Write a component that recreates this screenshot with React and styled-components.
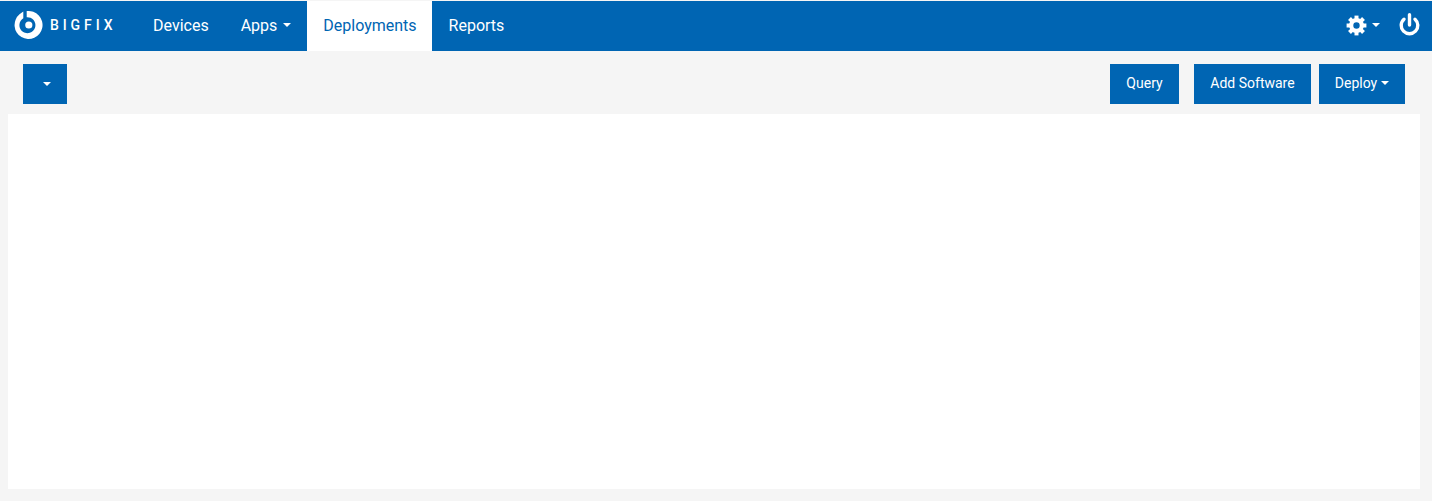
import React from "react";
import styled, { createGlobalStyle } from "styled-components";

const blue = "#0065b3";

const GlobalStyle = createGlobalStyle`
  html, body {
    margin: 0;
    padding: 0;
    background: #f5f5f5;
    font-family: Roboto, "Liberation Sans", sans-serif;
  }
`;

const Page = styled.div`
  height: 501px;
  display: flex;
  flex-direction: column;
  overflow: hidden;
`;

const Navbar = styled.header`
  height: 50px;
  margin-top: 1px;
  display: flex;
  align-items: stretch;
  background: ${blue};
  color: #fff;
`;

const Brand = styled.div`
  width: 137px;
  display: flex;
  align-items: center;
  gap: 7px;
  padding: 0 0 2px 14px;
  box-sizing: border-box;
`;

const BrandName = styled.span`
  font-size: 14px;
  font-weight: 500;
  letter-spacing: 3.9px;
`;

const NavItem = styled.a`
  display: flex;
  align-items: center;
  gap: 6px;
  padding: 0 ${(p) => (p.$active ? "15.5px" : "16px")} 2px 16px;
  margin-right: ${(p) => (p.$active ? "0.5px" : "0")};
  font-size: 16px;
  color: ${(p) => (p.$active ? blue : "#fff")};
  background: ${(p) => (p.$active ? "#fff" : "transparent")};
`;

const Caret = styled.span`
  display: inline-block;
  width: 0;
  height: 0;
  border-left: 4px solid transparent;
  border-right: 4px solid transparent;
  border-top: 4px solid #fff;
`;

const NavRight = styled.div`
  margin-left: auto;
  display: flex;
  align-items: center;
  padding: 0 12px 2px 0;
`;

const SettingsMenu = styled.div`
  display: flex;
  align-items: center;
  gap: 5px;
  margin-right: 19px;
`;

const Toolbar = styled.div`
  display: flex;
  justify-content: space-between;
  padding: 13px 27px 10px 23px;
`;

const ActionGroup = styled.div`
  display: flex;
`;

const Button = styled.button`
  height: 40px;
  width: ${(p) => p.$width}px;
  margin-left: ${(p) => p.$gap || 0}px;
  padding: 0 0 2px;
  border: 0;
  border-radius: 0;
  display: flex;
  align-items: center;
  justify-content: center;
  gap: 4px;
  background: ${blue};
  color: #fff;
  font-family: inherit;
  font-size: 14px;
`;

const CaretButton = styled(Button)`
  padding: 0 0 0 4px;
`;

const Panel = styled.main`
  flex: 1;
  margin: 0 12px 12px 8px;
  background: #fff;
`;

const BigfixLogo = () => (
  <svg width="29" height="30" viewBox="0 0 29 30" aria-hidden="true">
    <path
      d="M12.7 1.1 A14 14 0 1 1 5.5 4.3 L9.3 1.6 V8.3 A8 8 0 1 0 12.7 7.2 Z"
      fill="#fff"
    />
    <circle cx="14.8" cy="15" r="3.6" fill="#fff" />
  </svg>
);

const CogIcon = () => (
  <svg width="21" height="21" viewBox="0 0 21 21" aria-hidden="true">
    <circle cx="10.5" cy="10.5" r="5.3" fill="none" stroke="#fff" strokeWidth="4.2" />
    {[0, 45, 90, 135, 180, 225, 270, 315].map((angle) => (
      <path
        key={angle}
        d="M10.5 5 V0.6"
        stroke="#fff"
        strokeWidth="4"
        transform={`rotate(${angle} 10.5 10.5)`}
      />
    ))}
  </svg>
);

const PowerIcon = () => (
  <svg width="21" height="24" viewBox="0 0 21 24" aria-hidden="true">
    <path
      d="M5 6.2 A8.3 8.3 0 1 0 16 6.2"
      fill="none"
      stroke="#fff"
      strokeWidth="3.4"
      strokeLinecap="round"
    />
    <path d="M10.5 1.7 V12" stroke="#fff" strokeWidth="3.4" strokeLinecap="round" />
  </svg>
);

const App = () => {
  return (
    <Page>
      <GlobalStyle />
      <Navbar>
        <Brand>
          <BigfixLogo />
          <BrandName>BIGFIX</BrandName>
        </Brand>
        <NavItem>Devices</NavItem>
        <NavItem>
          Apps <Caret />
        </NavItem>
        <NavItem $active>Deployments</NavItem>
        <NavItem>Reports</NavItem>
        <NavRight>
          <SettingsMenu>
            <CogIcon />
            <Caret />
          </SettingsMenu>
          <PowerIcon />
        </NavRight>
      </Navbar>
      <Toolbar>
        <CaretButton $width={44}>
          <Caret />
        </CaretButton>
        <ActionGroup>
          <Button $width={69}>Query</Button>
          <Button $width={117} $gap={15}>
            Add Software
          </Button>
          <Button $width={86} $gap={8}>
            Deploy <Caret />
          </Button>
        </ActionGroup>
      </Toolbar>
      <Panel />
    </Page>
  );
};

export default App;
